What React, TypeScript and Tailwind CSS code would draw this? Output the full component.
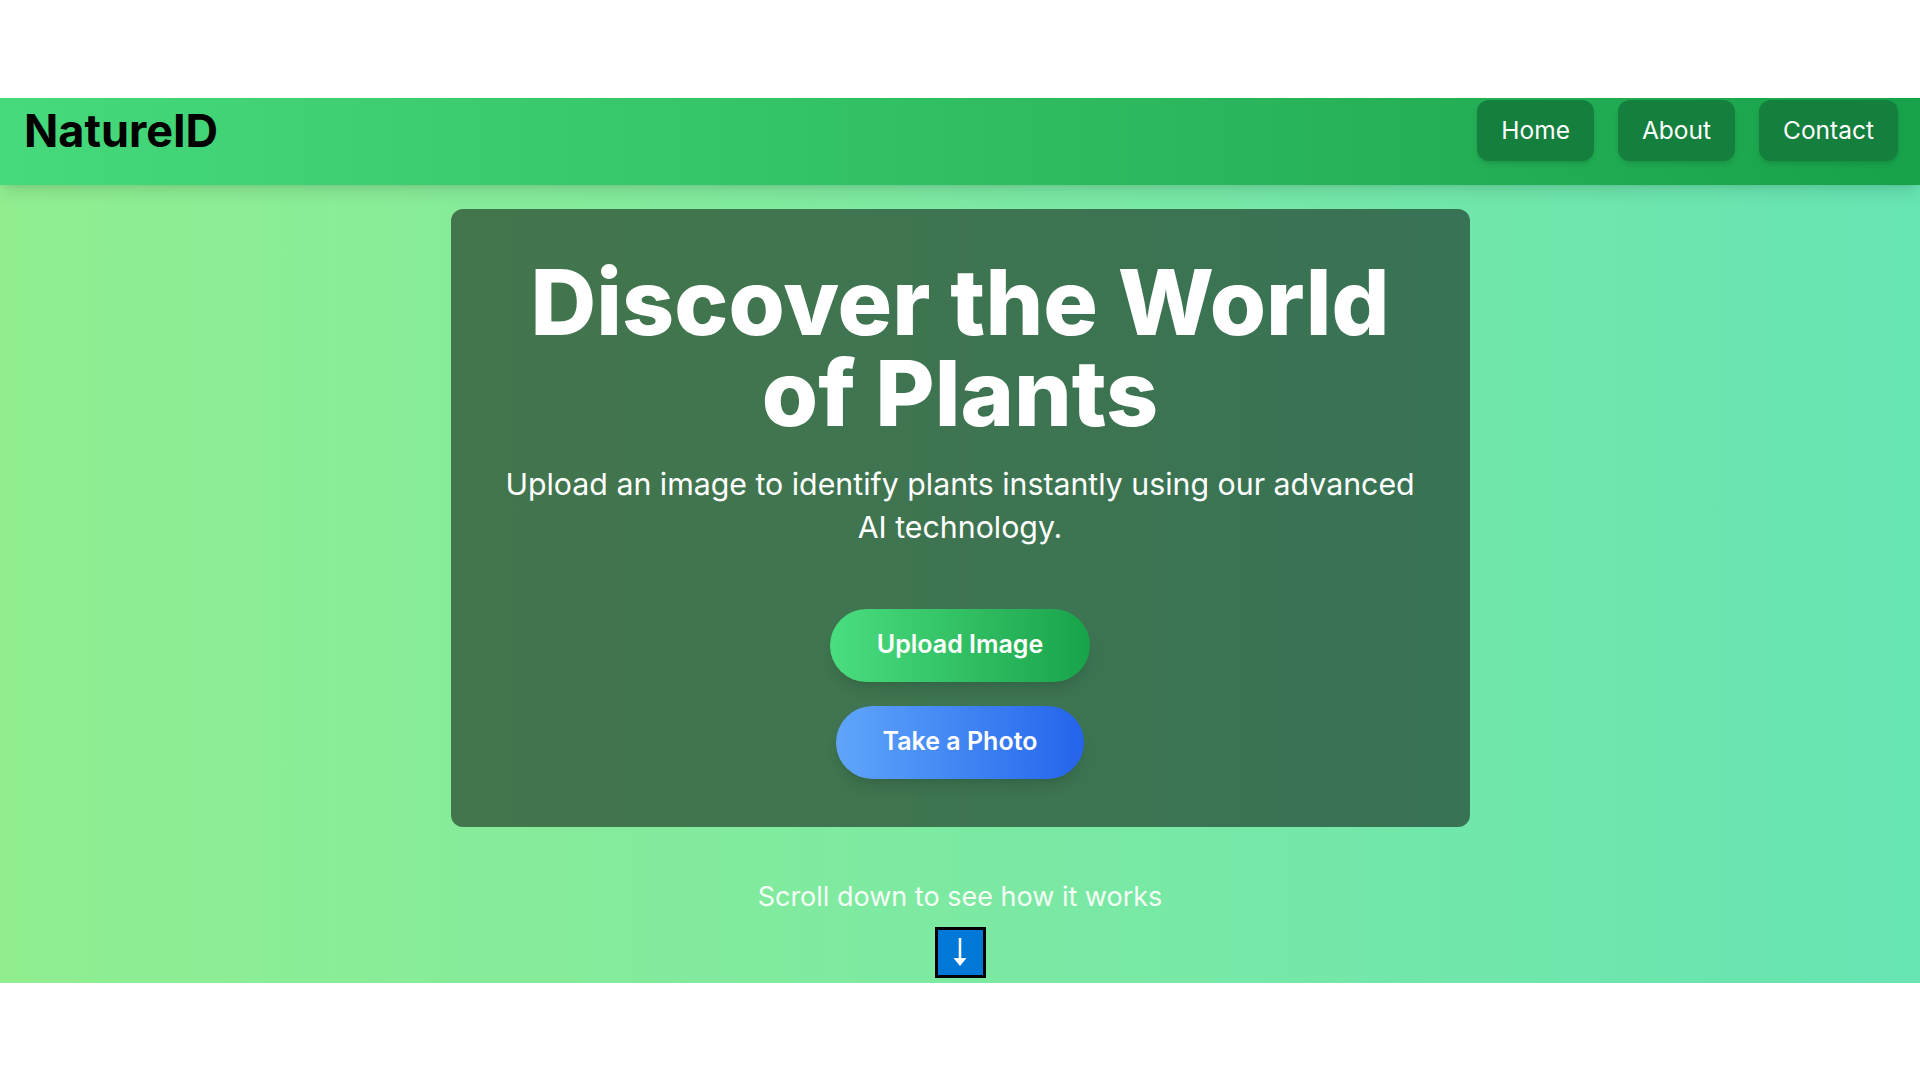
export default function App() {
  const links = ["Home", "About", "Contact"];

  return (
    <div className="min-h-screen flex items-center bg-white font-['Inter',sans-serif]">
      <div className="w-full bg-linear-to-r from-[#90ee90] to-[#66e4b2] pb-[5px]">
        {/* top bar */}
        <header className="h-[87px] bg-linear-to-r from-[#46da7c] to-[#17a24a] shadow-lg pl-6 pr-[22px] pt-[2px]">
          <div className="h-[61px] flex items-center justify-between">
            <div className="text-[45px] font-bold text-black leading-none">NatureID</div>
            <nav className="flex gap-6">
              {links.map((l) => (
                <a
                  key={l}
                  href="#"
                  className="h-[61px] px-6 flex items-center rounded-xl bg-[#157f3d] text-white text-[24.5px] shadow-md"
                >
                  {l}
                </a>
              ))}
            </nav>
          </div>
        </header>

        {/* hero card */}
        <section className="w-[1019px] mx-auto mt-6 rounded-xl bg-black/50 p-12 text-center text-white">
          <h1 className="text-[91px] font-extrabold leading-none">
            Discover the World of Plants
          </h1>
          <p className="mt-6 text-[30.3px] leading-[43px]">
            Upload an image to identify plants instantly using our advanced AI technology.
          </p>
          <div className="mt-[60px] flex flex-col items-center gap-6">
            <button className="h-[73px] px-[47px] rounded-full bg-linear-to-r from-[#4ade80] to-[#16a34a] text-white text-[25px] font-semibold shadow-lg">
              Upload Image
            </button>
            <button className="h-[73px] px-[47px] rounded-full bg-linear-to-r from-[#60a5fa] to-[#2563eb] text-white text-[25px] font-semibold shadow-lg">
              Take a Photo
            </button>
          </div>
        </section>

        {/* scroll hint */}
        <div className="mt-[54px] flex flex-col items-center">
          <p className="text-[27px] leading-8 text-[#f5fff5]">Scroll down to see how it works</p>
          <div className="mt-[14px] w-[51px] h-[51px] border-[3px] border-black bg-[#0078d7] flex items-center justify-center">
            <svg width="20" height="34" viewBox="0 0 20 34" fill="none">
              <line x1="10" y1="3" x2="10" y2="26" stroke="white" strokeWidth="2.5" />
              <path d="M3.5 23 L16.5 23 L10 31 Z" fill="white" />
            </svg>
          </div>
        </div>
      </div>
    </div>
  );
}
